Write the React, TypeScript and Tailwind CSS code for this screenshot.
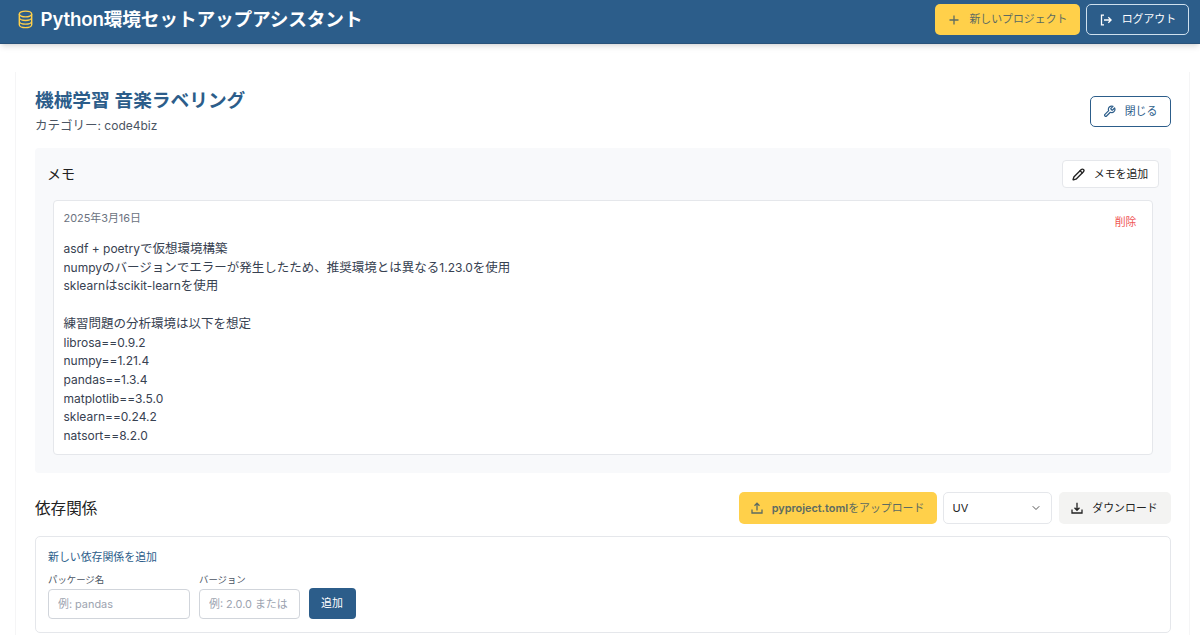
import type { ReactNode } from "react";
import { ChevronDown } from "lucide-react";
import { LuPencil, LuWrench } from "react-icons/lu";

const MEMO_BODY = `asdf + poetryで仮想環境構築
numpyのバージョンでエラーが発生したため、推奨環境とは異なる1.23.0を使用
sklearnはscikit-learnを使用

練習問題の分析環境は以下を想定
librosa==0.9.2
numpy==1.21.4
pandas==1.3.4
matplotlib==3.5.0
sklearn==0.24.2
natsort==8.2.0`;

// Latin runs are set slightly smaller so they sit evenly next to the kana
const MixedText = ({ text }: { text: string }) => (
  <>
    {text.split(/([\x20-\x7e]+)/).map((part, i) =>
      i % 2 ? (
        <span key={i} className="text-[12px]">
          {part}
        </span>
      ) : (
        part
      )
    )}
  </>
);

const StackIcon = () => (
  <svg className="h-[19px] w-[15px]" viewBox="0 0 15 19" fill="none" stroke="currentColor" strokeWidth="1.4">
    <ellipse cx="7.5" cy="4" rx="6.2" ry="2.9" />
    <path d="M1.3 4v3.6c0 1.6 2.8 2.9 6.2 2.9s6.2-1.3 6.2-2.9V4M1.3 7.6v3.6c0 1.6 2.8 2.9 6.2 2.9s6.2-1.3 6.2-2.9V7.6M1.3 11.2v3.5c0 1.6 2.8 2.9 6.2 2.9s6.2-1.3 6.2-2.9v-3.5" />
  </svg>
);

const Icon = ({ children }: { children: ReactNode }) => (
  <svg className="h-3 w-3 shrink-0" viewBox="0 0 12 12" fill="none" stroke="currentColor" strokeWidth="1.3">
    {children}
  </svg>
);

const App = () => {
  return (
    <div className="h-[635px] overflow-hidden bg-white font-['Inter','Noto_Sans_CJK_JP',sans-serif] text-[12.5px] leading-[18.7px] text-[#222]">
      {/* Header */}
      <header className="flex h-11 items-start justify-between border-b border-[#29527a] bg-[#2c5d8a] pt-1 pr-[10.6px] pl-[17.5px] shadow-md">
        <div className="flex items-center pt-[2px]">
          <span className="-mt-[2px] text-[#ffd04a]">
            <StackIcon />
          </span>
          <h1 className="ml-2 text-[18.7px] leading-7 font-semibold tracking-[-0.16px] whitespace-nowrap text-white">
            Python環境セットアップアシスタント
          </h1>
        </div>
        <div className="flex gap-[6px]">
          <button className="flex h-[31px] w-[145px] items-center justify-center gap-[9px] rounded-[5px] bg-[#ffd04a] text-[#5c6b62]">
            <Icon>
              <path d="M6 1.5v9M1.5 6h9" />
            </Icon>
            <span className="text-[10.9px] whitespace-nowrap">新しいプロジェクト</span>
          </button>
          <button className="flex h-[31px] w-[103px] items-center justify-center gap-[10px] rounded-[5px] border border-[#cfe0ee] text-white">
            <Icon>
              <path d="M4 1.2H1.5v9.6H4M4 6h7M8.3 3.2 11.1 6 8.3 8.8" />
            </Icon>
            <span className="text-[10.9px] whitespace-nowrap">ログアウト</span>
          </button>
        </div>
      </header>

      <main className="mt-[28px] mr-[10px] ml-[15px] h-[600px] border-x border-[#f5f5f6] pt-[17px] pr-[18.5px] pl-[19px]">
        {/* Project title */}
        <div className="flex h-[59px] items-start justify-between">
          <div>
            <h2 className="text-[18.7px] leading-6 font-semibold text-[#2c5d8a]">機械学習 音楽ラベリング</h2>
            <p className="mt-1 text-[#4b5563]">
              <MixedText text="カテゴリー: code4biz" />
            </p>
          </div>
          <button className="mt-[7px] flex h-[31px] w-[81px] items-center justify-center gap-[9px] rounded-[5px] border border-[#2c5d8a] text-[#2c5d8a]">
            <LuWrench className="h-[13px] w-[13px]" strokeWidth={2.2} />
            <span className="text-[10.9px]">閉じる</span>
          </button>
        </div>

        {/* Memo */}
        <section className="h-[325px] rounded bg-[#f8f9fb] px-3 pt-3">
          <div className="flex items-center justify-between">
            <h3 className="text-[14px]">メモ</h3>
            <button className="flex h-7 w-[97px] items-center justify-center gap-[9px] rounded border border-[#e5e7eb] bg-white">
              <LuPencil className="h-[13px] w-[13px]" strokeWidth={2.5} />
              <span className="text-[10.9px]">メモを追加</span>
            </button>
          </div>
          <article className="mx-[6px] mt-3 h-[255px] rounded border border-[#e5e7eb] bg-white pt-2 pr-[10px] pl-[9.5px]">
            <div className="flex justify-between pr-[5px]">
              <time className="text-[10.9px] leading-[18px] text-[#6b7280]">2025年3月16日</time>
              <button className="mt-1 text-[10.9px] leading-[18px] text-[#ef5555]">削除</button>
            </div>
            <p className="mt-[9px] leading-[18.72px] whitespace-pre-wrap text-[#374151]">
              <MixedText text={MEMO_BODY} />
            </p>
          </article>
        </section>

        {/* Dependencies */}
        <div className="mt-[19px] flex items-center justify-between">
          <h3 className="pt-[2px] text-[15.6px]">依存関係</h3>
          <div className="flex">
            <button className="flex h-8 w-[198px] items-center justify-center gap-[9px] rounded-[5px] bg-[#ffd04a] text-[#5c6b62]">
              <Icon>
                <path d="M1 7.5V11h10V7.5M6 8.5V1.2M3.5 3.7 6 1.2l2.5 2.5" />
              </Icon>
              <span className="text-[10.9px] whitespace-nowrap">
                <span className="font-semibold">pyproject.toml</span>をアップロード
              </span>
            </button>
            <button className="ml-[6px] flex h-8 w-[109px] items-center justify-between rounded-[5px] border border-[#e5e7eb] px-[9px] text-[11px]">
              UV
              <ChevronDown className="h-3 w-3 text-[#555]" strokeWidth={2} />
            </button>
            <button className="ml-[7px] flex h-8 w-[112px] items-center justify-center gap-[9px] rounded-[5px] bg-[#f3f3f2]">
              <Icon>
                <path d="M1 7.5V11h10V7.5M6 .8v7.5M3.5 5.8 6 8.3l2.5-2.5" />
              </Icon>
              <span className="text-[10.9px] whitespace-nowrap">ダウンロード</span>
            </button>
          </div>
        </div>

        <section className="mt-3 h-[97px] rounded-[5px] border border-[#e5e7eb] px-3 pt-[11px]">
          <h4 className="text-[10.9px] leading-[18px] text-[#2c5d8a]">新しい依存関係を追加</h4>
          <div className="mt-[7px] flex items-end">
            <label className="w-[142px] text-[9.4px] leading-[14px] text-[#4b5563]">
              パッケージ名
              <input
                placeholder="例: pandas"
                className="mt-[2px] block h-[30px] w-full rounded-sm border border-[#d1d5db] px-[9px] text-[10.9px] placeholder:text-[#9ca3af]"
              />
            </label>
            <label className="ml-[9px] w-[100.5px] text-[9.4px] leading-[14px] text-[#4b5563]">
              バージョン
              <input
                placeholder="例: 2.0.0 または ^2.0.0"
                className="mt-[2px] block h-[30px] w-full rounded-sm border border-[#d1d5db] px-[9px] text-[10.9px] placeholder:text-[#9ca3af]"
              />
            </label>
            <button className="ml-[9px] h-[31px] w-[47px] rounded bg-[#2c5d8a] text-[10.9px] text-white">追加</button>
          </div>
        </section>
      </main>
    </div>
  );
};

export default App;
